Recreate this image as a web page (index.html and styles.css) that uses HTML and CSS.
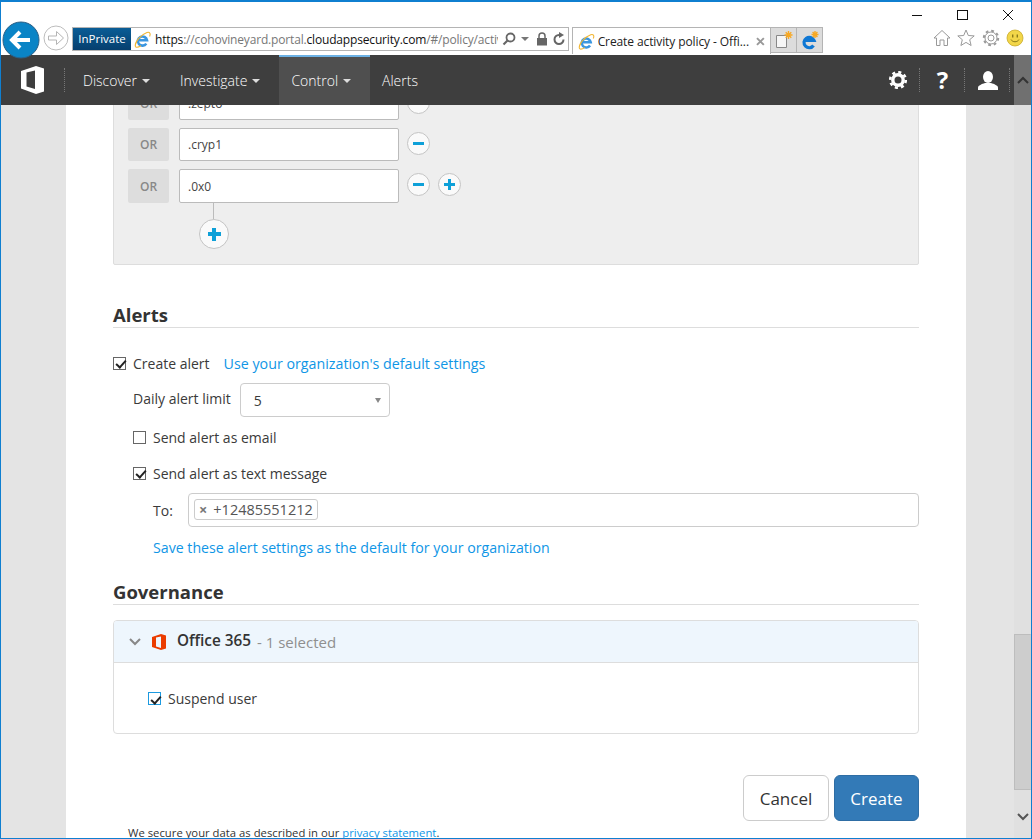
FILE: index.html
```html
<!DOCTYPE html>
<html lang="en">
<head>
<meta charset="utf-8">
<title>Create activity policy</title>
<link rel="stylesheet" href="styles.css">
</head>
<body>
<div class="window">
  <div class="chrome">
    <div class="caption">
      <span class="cap-btn"><svg width="12" height="12" viewBox="0 0 12 12"><path d="M0 6.500h10" stroke="#111" stroke-width="1"/></svg></span>
      <span class="cap-btn"><svg width="12" height="12" viewBox="0 0 12 12"><rect x=".5" y="1.500" width="10" height="9" fill="none" stroke="#111"/></svg></span>
      <span class="cap-btn"><svg width="12" height="12" viewBox="0 0 12 12"><path d="M1 1l10 10M11 1L1 11" stroke="#111" fill="none"/></svg></span>
    </div>
    <div class="toolbar">
      <svg class="back" width="38" height="38" viewBox="0 0 38 38"><circle cx="19" cy="19" r="18" fill="#0a84c6" stroke="#2b5f86"/><path d="M10 19h18M18 11l-8 8 8 8" fill="none" stroke="#fff" stroke-width="4"/></svg>
      <svg class="forward" width="26" height="26" viewBox="0 0 26 26"><circle cx="13" cy="13" r="12" fill="#fff" stroke="#bdbdbd"/><path d="M5.500 11h8V6.500l7 6.500-7 6.500V15h-8z" fill="none" stroke="#b5b5b5"/></svg>
      <div class="address">
        <span class="inprivate">InPrivate</span>
        <svg class="favicon" width="17" height="17" viewBox="0 0 17 17"><use href="#ie"/></svg>
        <span class="url"><b>https</b>://cohovineyard.portal.<b>cloudappsecurity.com</b>/#/policy/activ</span>
        <span class="addr-tools">
          <svg width="14" height="14" viewBox="0 0 14 14"><circle cx="8.500" cy="5.500" r="4" fill="none" stroke="#666" stroke-width="1.800"/><path d="M5.500 8.500L1.500 12.500" stroke="#666" stroke-width="2.200"/></svg>
          <svg class="mini-caret" width="8" height="4" viewBox="0 0 8 4"><path d="M0 0h8L4 4z" fill="#777"/></svg>
          <svg width="12" height="14" viewBox="0 0 12 14"><path d="M3 6V4a3 3 0 0 1 6 0v2" fill="none" stroke="#666" stroke-width="1.500"/><rect x="1" y="6" width="10" height="7.500" fill="#666"/></svg>
          <svg width="12" height="14" viewBox="0 0 12 14"><path d="M10.500 7.500A4.500 4.500 0 1 1 6 3" fill="none" stroke="#666" stroke-width="2"/><path d="M6 0l5 3-5 3z" fill="#666"/></svg>
        </span>
      </div>
      <div class="tab">
        <svg width="17" height="17" viewBox="0 0 17 17"><use href="#ie"/></svg>
        <span class="tab-title">Create activity policy - Offi...</span>
        <svg class="tab-x" width="9" height="9" viewBox="0 0 9 9"><path d="M1 1l7 7M8 1L1 8" stroke="#999" stroke-width="2"/></svg>
      </div>
      <div class="tab-btn">
        <svg width="18" height="20" viewBox="0 0 18 20"><path d="M1.500 5.500h10v12h-10z" fill="#f6f6f6" stroke="#888"/><path d="M13.500 1v8M9.500 5h8M10.700 2.200l5.600 5.600M16.300 2.200l-5.600 5.600" stroke="#f7a823" stroke-width="1.400"/></svg>
      </div>
      <div class="tab-btn">
        <svg width="20" height="20" viewBox="0 0 20 20"><path d="M3.500 10.500H14A5.200 5.200 0 1 0 13.500 15.500" fill="none" stroke="#0f78d4" stroke-width="3.200"/><path d="M15 1v7M11.500 4.500h7M12.600 2.100l4.800 4.800M17.400 2.100l-4.800 4.800" stroke="#f7a823" stroke-width="1.400"/></svg>
      </div>
      <div class="favs">
        <svg width="18" height="18" viewBox="0 0 18 18"><path d="M1 9l8-7.500L17 9h-2.500v7.500h-3.500V11H7v5.500H3.500V9z" fill="#fff" stroke="#999"/></svg>
        <svg width="18" height="18" viewBox="0 0 18 18"><path d="M9 1l2.300 5.500 5.900.4-4.500 3.800 1.400 5.800L9 13.400l-5.100 3.100 1.400-5.800L.8 6.900l5.900-.4z" fill="#fff" stroke="#999"/></svg>
        <svg width="18" height="18" viewBox="0 0 18 18"><circle cx="9" cy="9" r="3" fill="none" stroke="#999"/><circle cx="9" cy="9" r="6" fill="none" stroke="#999" stroke-width="1"/><circle cx="9" cy="9" r="7.200" fill="none" stroke="#999" stroke-width="2" stroke-dasharray="2.800 2.850"/></svg>
        <svg width="18" height="18" viewBox="0 0 18 18"><circle cx="9" cy="9" r="8" fill="#f2d649" stroke="#c9ab2b" stroke-width=".8"/><rect x="6" y="5.500" width="1.400" height="3" fill="#8a7a1a"/><rect x="10.600" y="5.500" width="1.400" height="3" fill="#8a7a1a"/><path d="M5 10.500c1.500 3 6.500 3 8 0" fill="none" stroke="#8a7a1a"/></svg>
      </div>
    </div>
  </div>

  <div class="app">
    <div class="app-main">
      <nav class="nav">
        <svg class="logo" width="24" height="28" viewBox="0 0 24 28"><path d="M0 5L15 0l8 2.500v23L15 28 0 22.500zM14 4.500L5.500 6.500v14L14 23z" fill="#fff" fill-rule="evenodd"/></svg>
        <span class="dots nav-sep"></span>
        <div class="nav-items">
          <a class="nav-item">Discover<i class="caret"></i></a>
          <a class="nav-item">Investigate<i class="caret"></i></a>
          <a class="nav-item active">Control<i class="caret"></i></a>
          <a class="nav-item">Alerts</a>
        </div>
        <div class="nav-right">
          <span class="nav-icon">
            <svg width="18" height="18" viewBox="0 0 18 18"><circle cx="9" cy="9" r="5.200" fill="none" stroke="#fff" stroke-width="3.400"/><circle cx="9" cy="9" r="7.800" fill="none" stroke="#fff" stroke-width="2.600" stroke-dasharray="3.060 3.065"/></svg>
          </span>
          <span class="nav-icon q">?</span>
          <span class="nav-icon">
            <svg width="20" height="19" viewBox="0 0 20 19"><ellipse cx="10" cy="6" rx="5" ry="6" fill="#fff"/><path d="M0 19v-2.500c0-2 4-3.500 7-4.500h6c3 1 7 2.500 7 4.500V19z" fill="#fff"/></svg>
          </span>
        </div>
      </nav>

      <main class="page">
        <div class="sheet">
          <section class="filter-box">
            <div class="or-row">
              <span class="or">OR</span><span class="val">.zepto</span>
              <span class="round minus"><i></i></span>
            </div>
            <div class="or-row">
              <span class="or">OR</span><span class="val">.cryp1</span>
              <span class="round minus"><i></i></span>
            </div>
            <div class="or-row tall">
              <span class="or">OR</span><span class="val">.0x0</span>
              <span class="round minus"><i></i></span>
              <span class="round plus"><i></i></span>
            </div>
            <div class="connector"></div>
            <span class="round plus big"><i></i></span>
          </section>

          <h2 class="heading alerts-h">Alerts</h2>
          <div class="check-row first">
            <span class="cb on"></span><span>Create alert</span>
            <a class="link gap">Use your organization's default settings</a>
          </div>
          <div class="limit-row">
            <span class="limit-label">Daily alert limit</span>
            <span class="select"><span>5</span><i></i></span>
          </div>
          <div class="check-row sub email">
            <span class="cb"></span><span>Send alert as email</span>
          </div>
          <div class="check-row sub sms">
            <span class="cb on"></span><span>Send alert as text message</span>
          </div>
          <div class="to-row">
            <span class="to-label">To:</span>
            <div class="to-input"><span class="chip"><b>×</b>+12485551212</span></div>
          </div>
          <a class="link save">Save these alert settings as the default for your organization</a>

          <h2 class="heading gov-h">Governance</h2>
          <div class="card">
            <div class="card-head">
              <svg class="chev" width="12" height="8" viewBox="0 0 12 8"><path d="M1 1l5 5 5-5" fill="none" stroke="#888" stroke-width="2"/></svg>
              <svg class="o365" width="14" height="16" viewBox="0 0 14 16"><path d="M0 3L9 0l5 1.500v13L9 16l-9-3zM9 2.500L4 3.500v9l5 1.500z" fill="#eb3c00" fill-rule="evenodd"/></svg>
              <span class="card-title">Office 365</span>
              <span class="card-sub">- 1 selected</span>
            </div>
            <div class="card-body">
              <span class="cb on blue"></span><span>Suspend user</span>
            </div>
          </div>
          <div class="actions">
            <button class="btn">Cancel</button>
            <button class="btn primary">Create</button>
          </div>
          <p class="foot">We secure your data as described in our <a class="link">privacy statement</a>.</p>
        </div>
      </main>
    </div>
    <div class="scrollbar">
      <div class="sb-up"><svg width="12" height="8" viewBox="0 0 12 8"><path d="M1 7l5-5 5 5" fill="none" stroke="#333" stroke-width="2"/></svg></div>
      <div class="sb-track"><div class="sb-thumb"></div></div>
      <div class="sb-down"><svg width="12" height="8" viewBox="0 0 12 8"><path d="M1 1l5 5 5-5" fill="none" stroke="#555" stroke-width="2"/></svg></div>
    </div>
  </div>
</div>
<svg class="defs" width="0" height="0">
  <defs>
    <g id="ie">
      <path d="M3.800 9.300H13A4.600 4.600 0 1 0 12.300 12.600" fill="none" stroke="#3a96e0" stroke-width="2.600"/>
      <path d="M1.500 15.200C.2 11.500 7 3.500 13 1.500c3-.9 3.800 1.400 2.600 4M3 10.500C.8 13.800.6 16.300 3 16.300c1.500 0 3-.9 4-1.500" fill="none" stroke="#f2b632" stroke-width="1.100"/>
    </g>
  </defs>
</svg>
</body>
</html>
```

FILE: styles.css
```css
* { box-sizing: border-box; }
html, body { margin: 0; height: 100%; overflow: hidden; }
body { font-family: "Open Sans", "Noto Sans", sans-serif; color: #3a3a3a; background: #fff; }
.defs { display: block; height: 0; }
.window { height: 839px; width: 1032px; display: flex; flex-direction: column; border: 1px solid #0f7fd0; border-top-width: 2px; background: #fff; }

.chrome { height: 53px; flex: none; display: flex; flex-direction: column; background: #fff; }
.caption { height: 25px; display: flex; justify-content: flex-end; align-items: flex-start; padding: 7px 17px 0 0; gap: 33px; }
.cap-btn { display: block; width: 12px; height: 12px; }
.cap-btn svg { display: block; }
.toolbar { height: 28px; display: flex; align-items: flex-start; position: relative; }
.back { flex: none; margin: -6px 0 0 1px; position: relative; z-index: 2; }
.forward { flex: none; margin: -2px 0 0 3px; }
.address { flex: none; margin-left: 3px; width: 497px; height: 24px; border: 1px solid #b4b4b4; display: flex; align-items: center; overflow: hidden; }
.inprivate { width: 58px; height: 22px; background: linear-gradient(#0a5d96, #063f6e); color: #fff; font: 11.500px/22px "Open Sans", sans-serif; text-align: center; flex: none; }
.favicon { margin-left: 3px; flex: none; }
.url { margin-left: 4px; font-size: 12px; color: #777; white-space: nowrap; width: 343px; overflow: hidden; letter-spacing: -.17px; }
.url b { font-weight: 400; color: #111; }
.addr-tools { margin-left: 4px; display: flex; align-items: center; gap: 5px; }
.mini-caret { margin-right: 2px; }
.tab { flex: none; margin-left: 3px; width: 199px; height: 27px; border: 1px solid #b4b4b4; border-bottom: 0; display: flex; align-items: center; padding: 0 5px; gap: 3px; }
.tab-title { font-size: 12px; color: #222; white-space: nowrap; width: 159px; overflow: hidden; letter-spacing: -.1px; }
.tab-btn { flex: none; width: 26px; height: 26px; background: #dcdcdc; border: 1px solid #b4b4b4; border-left: 0; display: flex; align-items: center; justify-content: center; }
.favs { margin-left: auto; margin-right: 7px; display: flex; gap: 6.500px; align-items: center; height: 22px; }

.app { flex: 1; display: flex; min-height: 0; }
.app-main { flex: 1; display: flex; flex-direction: column; min-width: 0; }
.nav { height: 50px; flex: none; background: #3e3e3e; display: flex; align-items: center; color: #fff; padding-left: 20px; font-size: 14px; font-weight: 300; position: relative; z-index: 1; }
.logo { flex: none; }
.dots { border-left: 1px dotted #777; height: 24px; }
.nav-sep { margin: 0 6px 0 19px; }
.nav-items { display: flex; height: 50px; margin-left: 0; }
.nav-item { display: flex; align-items: center; padding: 1px 12px 0; }
.nav-item i.caret { display: block; margin-left: 5px; border: 4.500px solid transparent; border-top-color: #ddd; border-bottom: 0; }
.nav-item:first-child { margin-right: 6px; }
.nav-item:nth-child(2) { margin-right: 7px; }
.nav-item.active { background: #4f4f4f; border-top: 2px solid #6cb1e4; padding: 0 19px 1px 12px; }
.nav-right { margin-left: auto; margin-right: 4px; display: flex; height: 100%; }
.nav-icon { width: 45px; height: 100%; display: flex; align-items: center; justify-content: center; position: relative; }
.nav-icon::after { content: ""; position: absolute; right: 0; top: 13px; height: 24px; border-right: 1px dotted #777; }
.nav-icon.q { font: 700 24px/1 "Open Sans", sans-serif; color: #fff; }

.page { flex: 1; min-height: 0; overflow: hidden; background: #e4e4e4; padding: 0 48px 0 65px; }
.sheet { width: 900px; height: 760px; background: #fff; padding: 0 47px; font-size: 14px; overflow: hidden; }

.filter-box { margin-top: -34px; height: 194px; padding-top: 15px; background: #eee; border: 1px solid #ddd; border-radius: 2px; padding-left: 14px; position: relative; }
.or-row { display: flex; height: 33px; margin-bottom: 8px; align-items: center; }
.or-row.tall { height: 34px; margin-bottom: 0; }
.or-row .round { margin-bottom: 3px; }
.or { width: 41px; height: 100%; background: #ddd; border-radius: 2px; color: #888; font-size: 12px; font-weight: 600; display: flex; align-items: center; justify-content: center; }
.val { width: 220px; height: 100%; margin-left: 10px; background: #fff; border: 1px solid #bbb; border-radius: 2px; padding-left: 8px; display: flex; align-items: center; font-size: 12px; color: #444; }
.round { width: 23px; height: 23px; border-radius: 50%; background: #fafafa; border: 1px solid #c4c4c4; margin-left: 8px; position: relative; display: block; flex: none; }
.round + .round { margin-left: 8px; }
.round i { position: absolute; left: 50%; top: 50%; width: 11px; height: 3px; margin: -1.500px 0 0 -5.500px; background: #0ea0d8; }
.round.plus i::after { content: ""; position: absolute; left: 4px; top: -4px; width: 3px; height: 11px; background: #0ea0d8; }
.round.big { width: 30px; height: 30px; margin: 0 0 0 71px; }
.round.big i { width: 13px; height: 4px; margin: -2px 0 0 -6.500px; }
.round.big i::after { left: 4.500px; top: -4.500px; width: 4px; height: 13px; }
.connector { width: 1px; height: 16px; background: #bbb; margin-left: 85px; }

.heading { margin: 0; font-size: 18.500px; font-weight: 700; color: #333; border-bottom: 1px solid #ddd; line-height: 24px; height: 25px; }
.alerts-h { margin-top: 38px; }
.gov-h { margin-top: 22px; }
.check-row { display: flex; align-items: center; height: 20px; gap: 7px; }
.check-row.first { margin-top: 25px; }
.cb { width: 13px; height: 13px; border: 1px solid #666; background: #fff; display: block; position: relative; flex: none; }
.cb.on::after { content: ""; position: absolute; left: 3.500px; top: .5px; width: 4px; height: 8px; border: solid #222; border-width: 0 2px 2px 0; transform: rotate(42deg); }
.cb.blue { border-color: #1c9ae0; }
.link { color: #0f96e6; }
.gap { margin-left: 7px; font-size: 14.250px; }
.limit-row { display: flex; align-items: center; height: 34px; margin: 10px 0 0 20px; gap: 9px; }
.limit-label { margin-bottom: 4px; }
.select { width: 150px; height: 34px; border: 1px solid #ccc; border-radius: 4px; padding: 2px 13px; display: flex; align-items: center; justify-content: space-between; margin-left: 0; }
.select i { display: block; margin-right: -5px; border: 3.500px solid transparent; border-top: 5px solid #888; border-bottom: 0; }
.sub { margin-left: 20px; }
.email { margin-top: 10px; }
.sms { margin-top: 16px; }
.to-row { display: flex; align-items: center; margin: 10px 0 0 40px; height: 34px; }
.to-label { width: 35px; }
.to-input { flex: 1; height: 34px; border: 1px solid #ccc; border-radius: 4px; padding: 5px; display: flex; align-items: flex-start; }
.chip { height: 21px; border: 1px solid #ccc; border-radius: 3px; display: flex; align-items: center; padding: 0 4px; font-size: 14.500px; color: #555; }
.chip b { color: #777; margin-right: 6px; }
.save { display: block; margin: 11px 0 0 40px; line-height: 20px; font-size: 14.180px; }

.card { margin-top: 15px; height: 114px; border: 1px solid #ddd; border-radius: 4px; overflow: hidden; }
.card-head { height: 42px; background: #eef6fd; border-bottom: 1px solid #ddd; display: flex; align-items: center; padding: 0 0 4px 15px; }
.chev { flex: none; margin-top: 4px; }
.o365 { margin: 4px 0 0 11px; flex: none; }
.card-title { margin-left: 11px; font-size: 15.300px; font-weight: 600; color: #333; }
.card-sub { margin-left: 6px; color: #8f8f8f; font-weight: 400; font-size: 15px; margin-top: 5px; }
.card-body { display: flex; align-items: center; gap: 7px; padding: 26px 0 0 34px; }
.actions { display: flex; justify-content: flex-end; gap: 5px; margin-top: 41px; }
.btn { width: 86px; height: 46px; border: 1px solid #ccc; border-radius: 6px; background: #fff; font: 400 17px "Open Sans", sans-serif; color: #333; }
.btn.primary { width: 85px; background: #337ab7; border-color: #2e6da4; color: #fff; }
.foot { margin: 4px 0 0 15px; font-size: 11.300px; line-height: 16px; color: #333; }

.scrollbar { width: 17px; flex: none; display: flex; flex-direction: column; background: #e0e0e0; }
.sb-up { height: 50px; background: #707070; display: flex; align-items: center; justify-content: center; }
.sb-track { flex: 1; display: flex; flex-direction: column; justify-content: flex-end; }
.sb-thumb { height: 156px; background: #cdcdcd; border: 1px solid #bdbdbd; border-right-color: #cdcdcd; }
.sb-down { height: 48px; display: flex; align-items: center; justify-content: center; padding-top: 6px; }
```
